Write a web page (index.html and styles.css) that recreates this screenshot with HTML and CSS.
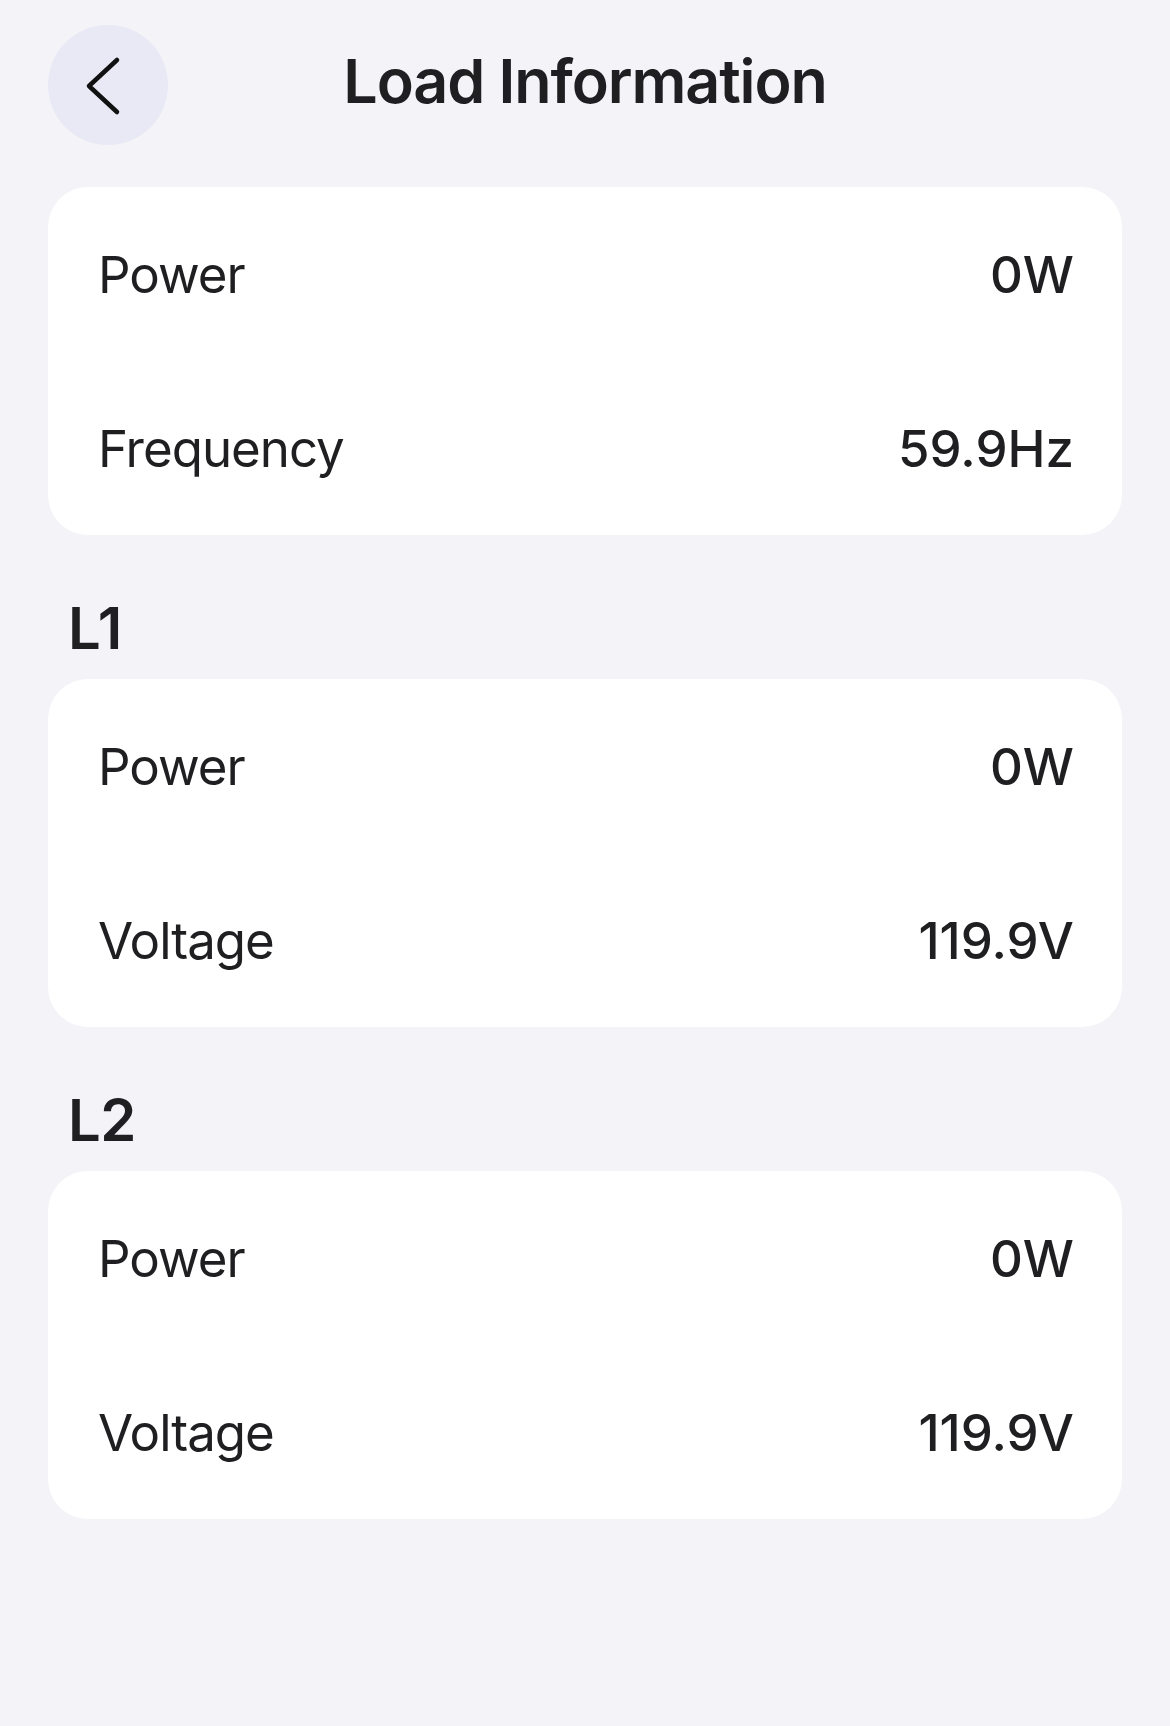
FILE: index.html
```html
<!DOCTYPE html>
<html>
    <head>
        <meta charset="utf-8">
        <title>Load Information</title>
        <meta name="viewport" content="width=device-width, initial-scale=1">
        <link rel="stylesheet" href="styles.css">
    </head>
    <body>
        <div class="page">
            <div class="header">
                <a class="back" href="#">
                    <svg width="120" height="120" viewBox="0 0 120 120">
                        <polyline points="69,35 41,61 69,87" fill="none" stroke="#111" stroke-width="4.5" stroke-linecap="round" stroke-linejoin="round"/>
                    </svg>
                </a>
                <h1 class="title">Load Information</h1>
                <span></span>
            </div>

            <div class="card">
                <div class="row"><span class="name">Power</span><span class="value">0W</span></div>
                <div class="row"><span class="name">Frequency</span><span class="value">59.9Hz</span></div>
            </div>

            <h2 class="section">L1</h2>
            <div class="card">
                <div class="row"><span class="name">Power</span><span class="value">0W</span></div>
                <div class="row"><span class="name">Voltage</span><span class="value">119.9V</span></div>
            </div>

            <h2 class="section">L2</h2>
            <div class="card">
                <div class="row"><span class="name">Power</span><span class="value">0W</span></div>
                <div class="row"><span class="name">Voltage</span><span class="value">119.9V</span></div>
            </div>
        </div>
    </body>
</html>
```

FILE: styles.css
```css
*{margin:0;padding:0;box-sizing:border-box}
body{
    background-color:#f3f3f8;
    font-family:Inter,"Noto Sans",sans-serif;
    color:#1f1f22;
}
.page{
    min-height:1726px;
    padding:25px 48px 0;
}
.header{
    display:grid;
    grid-template-columns:120px 1fr 120px;
    align-items:center;
    height:120px;
    margin-bottom:42px;
}
.back{
    display:block;
    width:120px;
    height:120px;
    border-radius:50%;
    background-color:#e9e9f5;
}
.back svg{display:block}
.title{
    text-align:center;
    font-size:61px;
    font-weight:600;
    letter-spacing:-1.1px;
    line-height:100px;
    margin-bottom:8px;
}
.card{
    background-color:#fff;
    border-radius:40px;
    padding:0 48px 0 50px;
}
.row{
    display:flex;
    justify-content:space-between;
    align-items:center;
    height:174px;
    font-size:51px;
    letter-spacing:-1px;
}
.name{font-weight:400}
.value{
    font-weight:500;
    letter-spacing:0;
}
.section{
    font-size:58px;
    font-weight:600;
    line-height:58px;
    padding:64px 20px 22px;
    letter-spacing:-0.5px;
}
```
